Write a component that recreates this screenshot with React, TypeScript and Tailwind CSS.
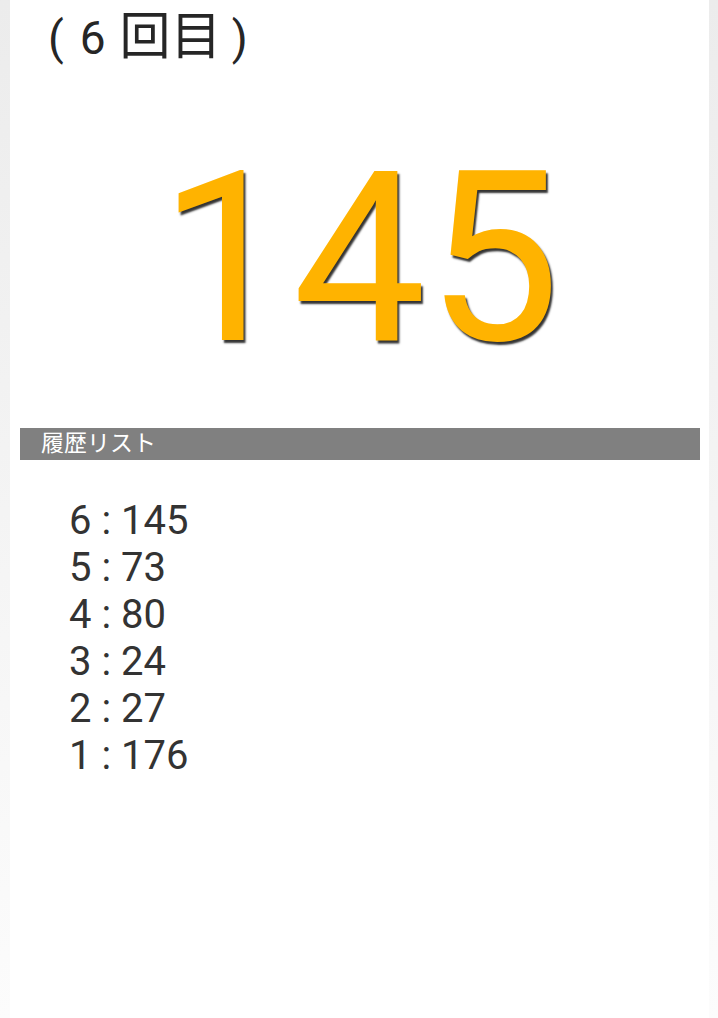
import React from "react";

const history = [
  { round: 6, value: 145 },
  { round: 5, value: 73 },
  { round: 4, value: 80 },
  { round: 3, value: 24 },
  { round: 2, value: 27 },
  { round: 1, value: 176 },
];

const App = () => {
  return (
    <div className="flex min-h-[1018px] w-full font-['Roboto','Noto_Sans_CJK_JP',sans-serif]">
      {/* side shade */}
      <div className="w-[10px] bg-gradient-to-b from-[#ececec] to-[#fcfcfc]" />

      <main className="flex-1 bg-white">
        {/* current round */}
        <div className="flex items-baseline pt-[10px] pl-[38px] text-[46px] leading-[53px] text-[#262626]">
          <span>(</span>
          <span className="ml-[16px]">6</span>
          <span className="ml-[14px] text-[51px]">回目</span>
          <span className="ml-[10px]">)</span>
        </div>

        {/* latest number */}
        <div className="mt-[75px] text-center text-[238px] leading-none text-[#ffb300] [text-shadow:2px_3px_2px_rgba(0,0,0,0.8)]">
          145
        </div>

        {/* history header */}
        <div className="mt-[50px] ml-[10px] mr-[9px] h-[32px] bg-[#808080] pl-[21px] text-[23px] leading-[32px] text-white">
          履歴リスト
        </div>

        {/* history list */}
        <ul className="mt-[37px] pl-[59px] text-[40px] leading-[47px] text-[#333333]">
          {history.map((h) => (
            <li key={h.round}>
              {h.round} : {h.value}
            </li>
          ))}
        </ul>
      </main>

      <div className="w-[9px] bg-gradient-to-b from-[#ececec] to-[#fcfcfc]" />
    </div>
  );
};

export default App;
